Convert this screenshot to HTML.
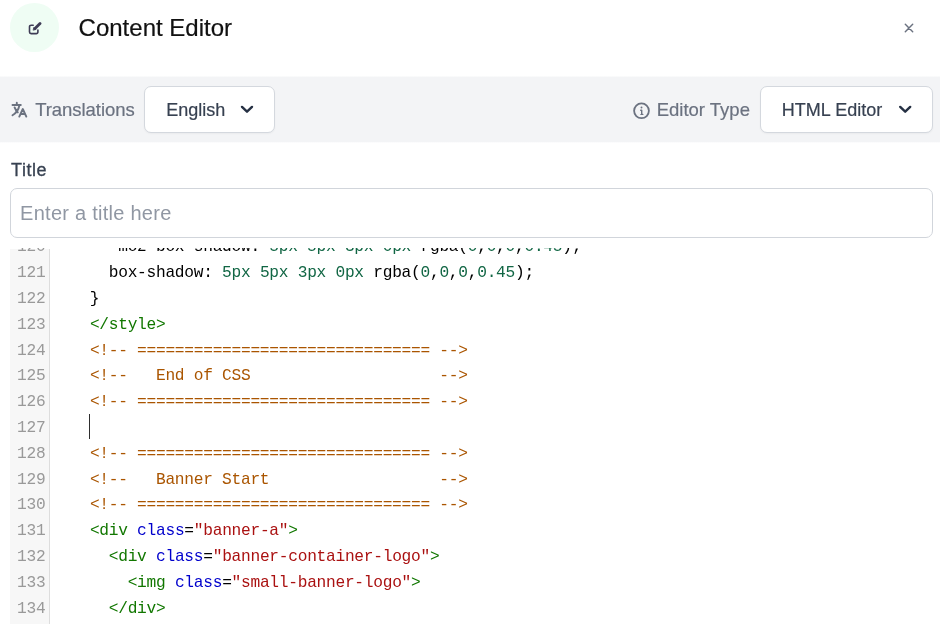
<!DOCTYPE html>
<html lang="en">
<head>
<meta charset="utf-8">
<title>Content Editor</title>
<style>
  html, body { margin: 0; padding: 0; }
  body {
    width: 940px; height: 624px; overflow: hidden; position: relative;
    background: #ffffff;
    font-family: "Liberation Sans", sans-serif;
    -webkit-font-smoothing: antialiased;
  }
  #stage { position: absolute; left: 0; top: 0; width: 940px; height: 624px; will-change: transform; }
  .abs { position: absolute; white-space: nowrap; }
  /* header */
  .badge { left: 10px; top: 3px; width: 49px; height: 49px; border-radius: 50%; background: #effdf4; }
  .badge svg { position: absolute; left: 17.8px; top: 18.6px; }
  .h1 { left: 78.6px; top: 13.8px; font-size: 24px; line-height: 28px; color: #111111; letter-spacing: 0px; -webkit-text-stroke: 0.2px #111; }
  .close { left: 904px; top: 23px; }
  /* toolbar band */
  .band { left: 0; top: 76px; width: 940px; height: 67px; background: linear-gradient(to bottom, rgba(243,244,246,0.45) 0px, rgba(243,244,246,0.45) 1px, #f3f4f6 1px, #f3f4f6 66px, rgba(243,244,246,0.3) 66px, rgba(243,244,246,0.3) 67px); }
  .lbl { font-size: 18.5px; line-height: 22px; color: #6b7280; -webkit-text-stroke: 0.2px #6b7280; }
  .sel { top: 86px; height: 45px; border: 1px solid #d4d8de; border-radius: 7px; background: #fff;
         box-shadow: 0 1px 2px rgba(0,0,0,0.04); }
  .sel span { position: absolute; top: 12px; font-size: 18px; line-height: 22px; color: #374151; -webkit-text-stroke: 0.2px #374151; }
  .sel svg { position: absolute; top: 18px; overflow: visible; }
  /* title */
  .tlabel { left: 11px; top: 158.6px; font-size: 18px; line-height: 22px; color: #374151; letter-spacing: 0.55px; -webkit-text-stroke: 0.3px #374151; }
  .input { left: 10px; top: 188px; width: 921px; height: 48px; border: 1px solid #d1d5db; border-radius: 7px; background: #fff; }
  .input span { position: absolute; left: 9.1px; top: 11.8px; font-size: 20px; line-height: 24px; color: #9097a3; letter-spacing: 0.26px; }
  /* code editor */
  .cm { left: 10px; top: 248px; width: 930px; height: 376px; overflow: hidden; background: #fff; }
  .gutter { position: absolute; left: 0; top: 0.7px; width: 39px; height: 376px; background: #f7f7f7; border-right: 1px solid #dddddd; }
  .lines { position: absolute; left: 0; top: -12.6px; margin: 0; }
  .ln { position: relative; height: 25.8px; line-height: 25.8px; white-space: pre;
        font-family: "Liberation Mono", monospace; font-size: 16.2px; letter-spacing: -0.27px; color: #000; }
  .ln i { font-style: normal; position: absolute; left: 7px; color: #999999; }
  .ln b { font-weight: normal; position: absolute; left: 42.1px; }
  .t { color: #117700; } .a { color: #0000cc; } .s { color: #aa1111; } .c { color: #aa5500; } .n { color: #116644; }
  .cursor { left: 79.3px; top: 165.6px; width: 1.2px; height: 25.5px; background: #2e2e2e; }
</style>
</head>
<body>
<div id="stage">
  <div class="abs badge">
    <svg width="15" height="14" viewBox="0 0 15 14" fill="none" stroke="#3f3d56" stroke-linecap="round" stroke-linejoin="round">
      <path d="M5.2 3.2H3.1A1.6 1.6 0 0 0 1.5 4.8V10A1.6 1.6 0 0 0 3.1 11.6H8.3A1.6 1.6 0 0 0 9.9 10V8" stroke-width="1.6"/>
      <path d="M7 6.600L12 1.600" stroke-width="2.8"/>
      <path d="M6.100 5.700L7.900 7.500L5.500 8.100Z" fill="#3f3d56" stroke-width="0.8"/>
    </svg>
  </div>
  <div class="abs h1">Content Editor</div>
  <svg class="abs close" width="10" height="10" viewBox="0 0 10 10" stroke="#6b7280" stroke-width="1.45" stroke-linecap="round"><path d="M1.300 1.300L8.700 8.700M8.700 1.300L1.300 8.700"/></svg>

  <div class="abs band"></div>
  <svg class="abs" style="left:9px;top:99px" width="22" height="22" viewBox="0 0 22 22" fill="none" stroke="#6b7280" stroke-width="1.9" stroke-linecap="round" stroke-linejoin="round">
    <path d="M3.5 6H11.8M7.8 3.700V6M10.500 6C9.700 10.300 7.300 14 3.500 16.300M5.600 8.400C6.300 10.300 7.400 12 8.800 13.400"/>
    <path d="M10.300 17.600L13.800 10L17.300 17.600M11.500 15H16.100"/>
  </svg>
  <div class="abs lbl" style="left:35.2px;top:99px;letter-spacing:-0.05px">Translations</div>
  <div class="abs sel" style="left:144px;width:129px">
    <span style="left:21.3px">English</span>
    <svg style="left:95px" width="14" height="10" viewBox="0 0 14 10" fill="none" stroke="#253043" stroke-width="2.4" stroke-linecap="round" stroke-linejoin="round"><path d="M2 1.900L7 6.700L12 1.900"/></svg>
  </div>

  <svg class="abs" style="left:631px;top:100.3px" width="22" height="22" viewBox="0 0 22 22" fill="none" stroke="#6b7280" stroke-linecap="round" stroke-linejoin="round">
    <circle cx="10.5" cy="10.8" r="7.4" stroke-width="1.8"/>
    <path d="M9.700 10.300H10.700V14.300M10 14.400H11.800" stroke-width="1.4"/>
    <circle cx="10.500" cy="7.500" r="0.950" fill="#6b7280" stroke="none"/>
  </svg>
  <div class="abs lbl" style="left:656.7px;top:99px;letter-spacing:0px">Editor Type</div>
  <div class="abs sel" style="left:760px;width:171px">
    <span style="left:20.8px">HTML Editor</span>
    <svg style="left:137px" width="14" height="10" viewBox="0 0 14 10" fill="none" stroke="#253043" stroke-width="2.4" stroke-linecap="round" stroke-linejoin="round"><path d="M2.200 1.900L7.200 6.700L12.200 1.900"/></svg>
  </div>

  <div class="abs tlabel">Title</div>
  <div class="abs input"><span>Enter a title here</span></div>

  <div class="abs cm">
    <div class="gutter"></div>
    <div class="lines">
<div class="ln"><i>120</i><b>      -moz-box-shadow: <span class="n">5px</span> <span class="n">5px</span> <span class="n">3px</span> <span class="n">0px</span> rgba(<span class="n">0</span>,<span class="n">0</span>,<span class="n">0</span>,<span class="n">0.45</span>);</b></div>
<div class="ln"><i>121</i><b>      box-shadow: <span class="n">5px</span> <span class="n">5px</span> <span class="n">3px</span> <span class="n">0px</span> rgba(<span class="n">0</span>,<span class="n">0</span>,<span class="n">0</span>,<span class="n">0.45</span>);</b></div>
<div class="ln"><i>122</i><b>    }</b></div>
<div class="ln"><i>123</i><b>    <span class="t">&lt;/style&gt;</span></b></div>
<div class="ln"><i>124</i><b>    <span class="c">&lt;!-- =============================== --&gt;</span></b></div>
<div class="ln"><i>125</i><b>    <span class="c">&lt;!--   End of CSS                    --&gt;</span></b></div>
<div class="ln"><i>126</i><b>    <span class="c">&lt;!-- =============================== --&gt;</span></b></div>
<div class="ln"><i>127</i><b>    </b></div>
<div class="ln"><i>128</i><b>    <span class="c">&lt;!-- =============================== --&gt;</span></b></div>
<div class="ln"><i>129</i><b>    <span class="c">&lt;!--   Banner Start                  --&gt;</span></b></div>
<div class="ln"><i>130</i><b>    <span class="c">&lt;!-- =============================== --&gt;</span></b></div>
<div class="ln"><i>131</i><b>    <span class="t">&lt;div</span> <span class="a">class</span>=<span class="s">"banner-a"</span><span class="t">&gt;</span></b></div>
<div class="ln"><i>132</i><b>      <span class="t">&lt;div</span> <span class="a">class</span>=<span class="s">"banner-container-logo"</span><span class="t">&gt;</span></b></div>
<div class="ln"><i>133</i><b>        <span class="t">&lt;img</span> <span class="a">class</span>=<span class="s">"small-banner-logo"</span><span class="t">&gt;</span></b></div>
<div class="ln"><i>134</i><b>      <span class="t">&lt;/div&gt;</span></b></div>
    </div>
    <div class="abs cursor"></div>
  </div>
</div>
</body>
</html>
